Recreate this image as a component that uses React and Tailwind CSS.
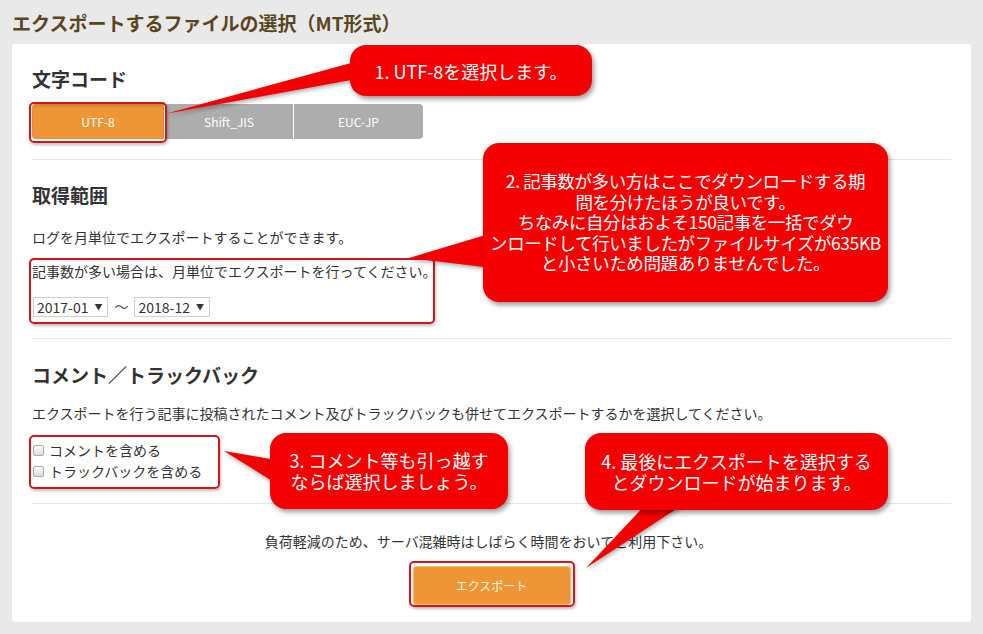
import React from 'react'

const font = { fontFamily: '"Noto Sans CJK JP", "Noto Sans", sans-serif' }

function Divider() {
  return <div className="border-t border-[#e6e6e6]" />
}

function Select({ value }) {
  return (
    <span className="inline-flex items-center h-[20px] border border-[#cfcfcf] pl-[3px] pr-[5px] text-[14px] text-[#333] leading-none">
      {value}
      <span className="ml-[6px] text-[8px] text-[#333]">▼</span>
    </span>
  )
}

function Check({ label }) {
  return (
    <label className="flex items-center h-[21px] text-[14px] leading-[21px] text-[#333]">
      <span className="ml-[1px] w-[11px] h-[11px] border border-[#a9a9a9] rounded-[2px] bg-gradient-to-b from-[#fdfdfd] to-[#dcdcdc]" />
      <span className="ml-[5px]">{label}</span>
    </label>
  )
}

function Bubble({ className, lines, lineClass }) {
  return (
    <div
      className={`absolute flex flex-col items-center justify-center text-center whitespace-nowrap rounded-[16px] bg-[#f50000] text-white shadow-[2px_3px_5px_rgba(0,0,0,0.4)] ${className}`}
    >
      {lines.map((l) => (
        <div key={l} className={`overflow-visible ${lineClass}`}>{l}</div>
      ))}
    </div>
  )
}

function Outline({ className }) {
  return (
    <div className={`absolute border-2 border-[#d3141c] rounded-[5px] shadow-[1px_2px_3px_rgba(0,0,0,0.25)] ${className}`} />
  )
}

export default function App() {
  return (
    <div className="relative w-[983px] h-[634px] overflow-hidden bg-[#e9e9e9]" style={font}>
      <div className="h-[44px] flex items-center px-[12px] pt-[3px]">
        <h1 className="text-[19px] font-bold text-[#5b4520]">エクスポートするファイルの選択（MT形式）</h1>
      </div>

      <div className="mx-[12px] h-[578px] bg-white rounded-[3px] px-[20px]">
        {/* 文字コード */}
        <div className="pt-[25px]">
          <h2 className="h-[20px] leading-[20px] text-[19px] font-bold text-[#333]">文字コード</h2>
          <div className="mt-[15px] flex w-[391px] h-[35px] rounded-[4px] overflow-hidden text-[12px] text-white">
            <div className="w-[132px] flex items-center justify-center bg-[#ee9636] shadow-[inset_0_2px_3px_rgba(0,0,0,0.15)]">UTF-8</div>
            <div className="w-[1px] bg-white" />
            <div className="w-[128px] flex items-center justify-center bg-[#adadad]">Shift_JIS</div>
            <div className="w-[1px] bg-white" />
            <div className="flex-1 flex items-center justify-center bg-[#adadad]">EUC-JP</div>
          </div>
        </div>
        <div className="mt-[20px]"><Divider /></div>

        {/* 取得範囲 */}
        <h2 className="mt-[25px] h-[20px] leading-[20px] text-[19px] font-bold text-[#333]">取得範囲</h2>
        <p className="mt-[22px] h-[20px] leading-[20px] text-[14px] text-[#333]">ログを月単位でエクスポートすることができます。</p>
        <p className="mt-[14px] h-[20px] leading-[20px] text-[14px] text-[#333]">記事数が多い場合は、月単位でエクスポートを行ってください。</p>
        <div className="mt-[15px] flex items-center pl-[1px]">
          <Select value="2017-01" />
          <span className="mx-[6px] text-[14px] text-[#555]">〜</span>
          <Select value="2018-12" />
        </div>
        <div className="mt-[21px]"><Divider /></div>

        {/* コメント／トラックバック */}
        <h2 className="mt-[26px] h-[20px] leading-[20px] text-[19px] font-bold text-[#333]">コメント／トラックバック</h2>
        <p className="mt-[18px] h-[20px] leading-[20px] text-[14px] text-[#333]">エクスポートを行う記事に投稿されたコメント及びトラックバックも併せてエクスポートするかを選択してください。</p>
        <div className="mt-[17px]">
          <Check label="コメントを含める" />
          <Check label="トラックバックを含める" />
        </div>
        <div className="mt-[21px]"><Divider /></div>

        {/* 実行 */}
        <p className="mt-[27px] h-[20px] leading-[20px] text-center text-[14px] text-[#333] pr-[6px]">負荷軽減のため、サーバ混雑時はしばらく時間をおいてご利用下さい。</p>
        <div className="mt-[15px] flex justify-center">
          <button className="w-[158px] h-[39px] rounded-[4px] bg-[#ee9636] text-[12px] text-[#fff6dc] shadow-[inset_0_0_0_1px_rgba(255,255,255,0.35),0_2px_2px_rgba(0,0,0,0.2)]">
            エクスポート
          </button>
        </div>
      </div>

      {/* annotation outlines */}
      <Outline className="left-[29px] top-[102px] w-[138px] h-[41px]" />
      <Outline className="left-[29px] top-[258px] w-[406px] h-[66px]" />
      <Outline className="left-[29px] top-[435px] w-[191px] h-[54px]" />
      <Outline className="left-[409px] top-[561px] w-[166px] h-[46px]" />

      {/* callout tails */}
      <svg className="absolute left-0 top-0" width="983" height="634" style={{ filter: 'drop-shadow(1px 2px 2px rgba(0,0,0,0.35))' }}>
        <polygon points="362,60 362,78 165,114" fill="#f50000" />
        <polygon points="492,233 492,268 409,258" fill="#f50000" />
        <polygon points="282,461 282,487 224,451" fill="#f50000" />
        <polygon points="650,500 690,500 586,568" fill="#f50000" />
      </svg>

      <Bubble
        className="left-[350px] top-[45px] w-[242px] h-[51px] text-[18px]"
        lineClass="h-[24px] leading-[24px]"
        lines={['1. UTF-8を選択します。']}
      />
      <Bubble
        className="left-[483px] top-[143px] w-[405px] h-[159px] text-[17.5px] tracking-[-0.4px]"
        lineClass="h-[20.5px] leading-[20.5px]"
        lines={[
          '2. 記事数が多い方はここでダウンロードする期',
          '間を分けたほうが良いです。',
          'ちなみに自分はおよそ150記事を一括でダウ',
          'ンロードして行いましたがファイルサイズが635KB',
          'と小さいため問題ありませんでした。',
        ]}
      />
      <Bubble
        className="left-[270px] top-[433px] w-[238px] h-[76px] text-[18px]"
        lineClass="h-[21px] leading-[21px]"
        lines={['3. コメント等も引っ越す', 'ならば選択しましょう。']}
      />
      <Bubble
        className="left-[585px] top-[433px] w-[303px] h-[77px] text-[18px]"
        lineClass="h-[21px] leading-[21px]"
        lines={['4. 最後にエクスポートを選択する', 'とダウンロードが始まります。']}
      />
    </div>
  )
}
